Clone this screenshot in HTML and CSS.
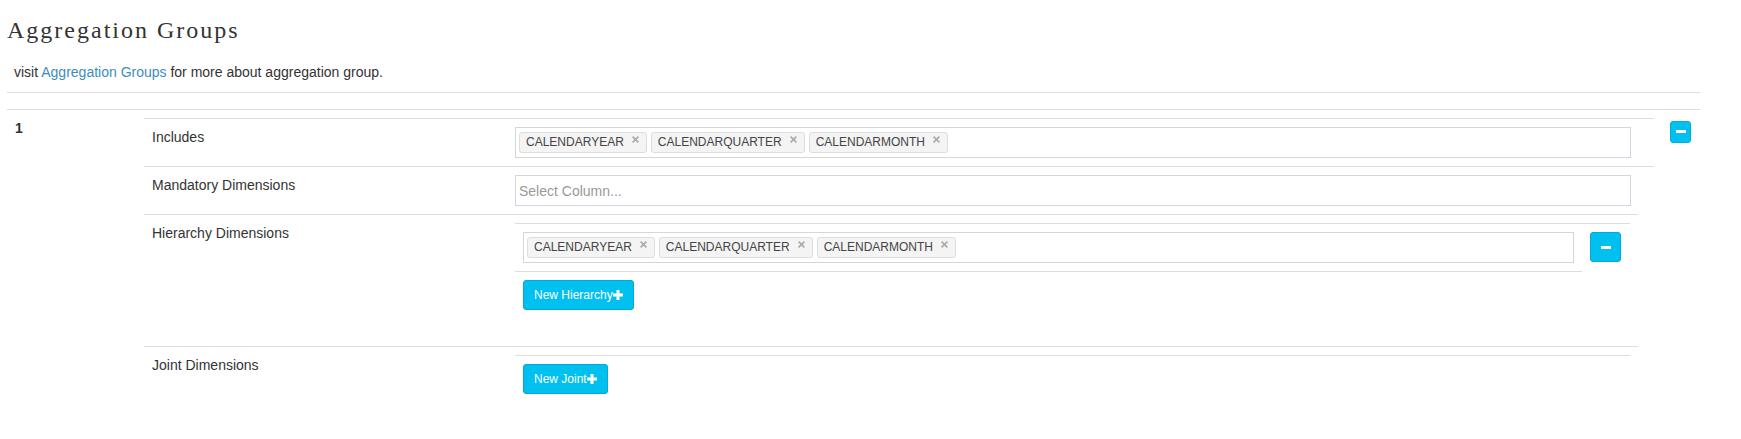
FILE: index.html
```html
<!DOCTYPE html>
<html>
<head>
<meta charset="utf-8">
<title>Aggregation Groups</title>
<link rel="stylesheet" href="styles.css">
</head>
<body>
<div class="page">
  <h3 class="title">Aggregation Groups</h3>
  <p class="intro">visit <a href="#" class="link">Aggregation Groups</a> for more about aggregation group.</p>
  <div class="groups">
    <div class="groups-head"></div>
    <div class="group-row">
      <div class="cell num">1</div>
      <div class="cell body">
        <div class="rows">
          <div class="row wide">
            <div class="label">Includes</div>
            <div class="content">
              <div class="select">
                <span class="tag"><span class="tag-text">CALENDARYEAR</span><span class="tag-x"><svg width="7" height="7" viewBox="0 0 7 7"><path d="M0.6 0.6L6.4 6.4M6.4 0.6L0.6 6.4" stroke="#aaa" stroke-width="1.6"/></svg></span></span>
                <span class="tag"><span class="tag-text">CALENDARQUARTER</span><span class="tag-x"><svg width="7" height="7" viewBox="0 0 7 7"><path d="M0.6 0.6L6.4 6.4M6.4 0.6L0.6 6.4" stroke="#aaa" stroke-width="1.6"/></svg></span></span>
                <span class="tag"><span class="tag-text">CALENDARMONTH</span><span class="tag-x"><svg width="7" height="7" viewBox="0 0 7 7"><path d="M0.6 0.6L6.4 6.4M6.4 0.6L0.6 6.4" stroke="#aaa" stroke-width="1.6"/></svg></span></span>
              </div>
            </div>
          </div>
          <div class="row wide">
            <div class="label">Mandatory Dimensions</div>
            <div class="content">
              <div class="select empty"><span class="placeholder">Select Column...</span></div>
            </div>
          </div>
          <div class="row narrow">
            <div class="label">Hierarchy Dimensions</div>
            <div class="content">
              <div class="subtable">
                <div class="subrow">
                  <div class="subcell">
                    <div class="select">
                      <span class="tag"><span class="tag-text">CALENDARYEAR</span><span class="tag-x"><svg width="7" height="7" viewBox="0 0 7 7"><path d="M0.6 0.6L6.4 6.4M6.4 0.6L0.6 6.4" stroke="#aaa" stroke-width="1.6"/></svg></span></span>
                      <span class="tag"><span class="tag-text">CALENDARQUARTER</span><span class="tag-x"><svg width="7" height="7" viewBox="0 0 7 7"><path d="M0.6 0.6L6.4 6.4M6.4 0.6L0.6 6.4" stroke="#aaa" stroke-width="1.6"/></svg></span></span>
                      <span class="tag"><span class="tag-text">CALENDARMONTH</span><span class="tag-x"><svg width="7" height="7" viewBox="0 0 7 7"><path d="M0.6 0.6L6.4 6.4M6.4 0.6L0.6 6.4" stroke="#aaa" stroke-width="1.6"/></svg></span></span>
                    </div>
                  </div>
                  <div class="subcell">
                    <button class="btn btn-minus"><span class="minus"></span></button>
                  </div>
                </div>
                <div class="subrow single">
                  <div class="subcell">
                    <button class="btn btn-text">New Hierarchy<svg class="plus" width="10" height="10" viewBox="0 0 10 10"><path d="M3.5 0h3v3.5h3.5v3h-3.5v3.5h-3v-3.5H0v-3h3.5z" fill="#fff"/></svg></button>
                  </div>
                </div>
              </div>
            </div>
          </div>
          <div class="row narrow">
            <div class="label">Joint Dimensions</div>
            <div class="content">
              <div class="subtable">
                <div class="subrow single-full">
                  <div class="subcell">
                    <button class="btn btn-text">New Joint<svg class="plus" width="10" height="10" viewBox="0 0 10 10"><path d="M3.5 0h3v3.5h3.5v3h-3.5v3.5h-3v-3.5H0v-3h3.5z" fill="#fff"/></svg></button>
                  </div>
                </div>
              </div>
            </div>
          </div>
        </div>
      </div>
      <div class="cell action">
        <button class="btn btn-minus-sm"><span class="minus"></span></button>
      </div>
    </div>
  </div>
</div>
</body>
</html>
```

FILE: styles.css
```css
html, body {
  margin: 0;
  padding: 0;
  background: #fff;
}
body {
  font-family: "Liberation Sans", Arial, sans-serif;
  font-size: 14px;
  line-height: 20px;
  color: #333;
}
.page {
  padding-left: 7px;
  width: 1693px;
}
.title {
  margin: 16px 0 0;
  font-family: "Liberation Serif", "Times New Roman", serif;
  font-weight: 400;
  font-size: 24px;
  line-height: 28px;
  letter-spacing: 2px;
  color: #333;
}
.intro {
  margin: 18px 0 0 7px;
}
.link {
  color: #3c8dbc;
  text-decoration: none;
}
.groups {
  margin-top: 10px;
}
.groups-head {
  border-top: 1px solid #ddd;
  height: 16px;
}
.group-row {
  display: grid;
  grid-template-columns: 129px 1526px 38px;
  border-top: 1px solid #ddd;
}
.cell {
  padding: 8px;
}
.num {
  font-weight: bold;
}
.rows {
  display: flex;
  flex-direction: column;
}
.row {
  display: grid;
  grid-template-columns: 363px 1fr;
  border-top: 1px solid #ddd;
}
.row.narrow {
  margin-right: 16px;
}
.label {
  padding: 8px;
}
.content {
  padding: 8px;
}
.row.wide .content {
  padding-right: 23px;
}
.select {
  box-sizing: border-box;
  height: 31px;
  border: 1px solid #d2d6de;
  padding: 4px 3px 0;
  display: flex;
  align-items: flex-start;
  gap: 4px;
}
.select.empty {
  padding: 5px 3px;
}
.placeholder {
  color: #999;
}
.tag {
  box-sizing: border-box;
  display: inline-flex;
  align-items: flex-start;
  height: 21px;
  border: 1px solid #ddd;
  border-radius: 3px;
  background: #f4f4f4;
  padding: 0 6px;
  font-size: 12px;
  line-height: 19px;
  color: #444;
}
.tag-x {
  width: 9px;
  margin-left: 7px;
  padding-top: 3px;
  display: flex;
  justify-content: center;
}
.subtable {
  margin-bottom: 20px;
}
.subrow {
  display: grid;
  grid-template-columns: 1fr 48px;
  border-top: 1px solid #ddd;
}
.subrow.single {
  grid-template-columns: 1fr;
  margin-right: 48px;
}
.subrow.single-full {
  grid-template-columns: 1fr;
}
.subcell {
  padding: 8px;
}
.btn {
  box-sizing: border-box;
  display: inline-flex;
  align-items: center;
  justify-content: center;
  background: #00c0ef;
  border: 1px solid #00acd6;
  border-radius: 3px;
  color: #fff;
  font-family: "Liberation Sans", Arial, sans-serif;
  font-size: 12px;
  line-height: 18px;
  margin: 0;
  cursor: pointer;
}
.btn-text {
  height: 30px;
  padding: 5px 10px;
}
.plus {
  display: block;
  margin-top: -1px;
}
.btn-minus-sm {
  width: 21px;
  height: 22px;
  padding: 0;
}
.btn-minus {
  width: 31px;
  height: 30px;
  padding: 0;
}
.minus {
  display: block;
  width: 10px;
  height: 3px;
  background: #fff;
}
```
